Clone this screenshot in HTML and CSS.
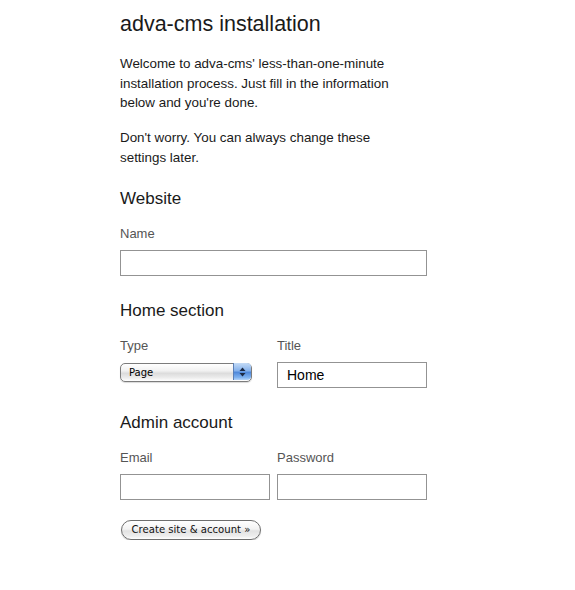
FILE: index.html
```html
<!DOCTYPE html>
<html>
<head>
<meta charset="utf-8">
<title>adva-cms installation</title>
<link rel="stylesheet" href="styles.css">
</head>
<body>
<div class="page">
  <h1 class="title">adva-cms installation</h1>
  <p class="intro">Welcome to adva-cms' less-than-one-minute installation process. Just fill in the information below and you're done.</p>
  <p class="intro">Don't worry. You can always change these settings later.</p>
  <form class="install-form">
    <section class="group">
      <h2 class="group-title">Website</h2>
      <div class="field">
        <label class="field-label">Name</label>
        <input class="text-input wide" type="text">
      </div>
    </section>
    <section class="group">
      <h2 class="group-title">Home section</h2>
      <div class="row">
        <div class="field">
          <label class="field-label">Type</label>
          <span class="popup">
            <select class="popup-select"><option>Page</option></select>
            <span class="popup-arrows">
              <svg width="7" height="10" viewBox="0 0 7 10"><path d="M3.5 0.5 L6.5 4 L0.5 4 Z" fill="#1c2a44"/><path d="M3.5 9.5 L6.5 6 L0.5 6 Z" fill="#1c2a44"/></svg>
            </span>
          </span>
        </div>
        <div class="field">
          <label class="field-label">Title</label>
          <input class="text-input" type="text" value="Home">
        </div>
      </div>
    </section>
    <section class="group">
      <h2 class="group-title">Admin account</h2>
      <div class="row">
        <div class="field">
          <label class="field-label">Email</label>
          <input class="text-input" type="text">
        </div>
        <div class="field">
          <label class="field-label">Password</label>
          <input class="text-input" type="password">
        </div>
      </div>
    </section>
    <div class="actions">
      <button class="submit" type="button">Create site &amp; account »</button>
    </div>
  </form>
</div>
</body>
</html>
```
FILE: styles.css
```css
html, body {
  margin: 0;
  padding: 0;
  background: #fff;
}
body {
  font-family: "Liberation Sans", Arial, Helvetica, sans-serif;
  color: #1a1a1a;
}
.page {
  padding: 11px 0 0 120px;
  width: 307px;
}
.title {
  font-size: 21.5px;
  font-weight: normal;
  line-height: 26px;
  margin: 0 0 17px;
}
.intro {
  font-size: 13.4px;
  line-height: 19.5px;
  margin: 0 0 15.5px;
  width: 285px;
}
.install-form {
  margin: 0;
}
.group {
  margin-top: 22px;
}
.group + .group {
  margin-top: 25px;
}
.group-title {
  font-size: 17px;
  font-weight: normal;
  line-height: 20px;
  margin: 0 0 17px;
}
.field-label {
  display: block;
  font-size: 13px;
  line-height: 16px;
  color: #555;
  margin-bottom: 8px;
}
.row {
  display: grid;
  grid-template-columns: 150px 150px;
  column-gap: 7px;
}
.text-input {
  display: block;
  box-sizing: border-box;
  width: 150px;
  height: 26px;
  margin: 0;
  border: 1px solid #939393;
  border-radius: 0;
  padding: 0 9px 0;
  font-family: "Liberation Sans", Arial, sans-serif;
  font-size: 14px;
  color: #000;
  background: #fff;
  outline: none;
}
.text-input.wide {
  width: 307px;
}
.popup {
  position: relative;
  display: block;
  width: 132px;
  height: 19px;
  margin-top: 1px;
}
.popup-select {
  -webkit-appearance: none;
  appearance: none;
  box-sizing: border-box;
  width: 132px;
  height: 19px;
  margin: 0;
  border: 1px solid #7c7c7c;
  border-radius: 5px;
  padding: 0 0 0 8px;
  font-family: "DejaVu Sans", "Liberation Sans", sans-serif;
  font-size: 10px;
  color: #000;
  background: linear-gradient(#ffffff 0%, #f1f1f1 40%, #dcdcdc 55%, #ececec 80%, #ffffff 100%);
  box-shadow: 0 1px 1px rgba(0,0,0,0.15);
  outline: none;
}
.popup-arrows {
  position: absolute;
  top: 1px;
  right: 1px;
  width: 18px;
  height: 17px;
  border-left: 1px solid #5b7fb6;
  border-radius: 0 4px 4px 0;
  background: linear-gradient(#c4dbf6 0%, #86b2ec 45%, #4f88da 55%, #7fb2f0 85%, #b7d5f8 100%);
  display: flex;
  align-items: center;
  justify-content: center;
  box-sizing: border-box;
}
.actions {
  margin-top: 19px;
}
.submit {
  box-sizing: border-box;
  width: 140px;
  height: 20px;
  margin: 0 0 0 1px;
  padding: 0;
  border: 1px solid #6e6e6e;
  border-radius: 10px;
  font-family: "DejaVu Sans", "Liberation Sans", sans-serif;
  font-size: 10.1px;
  color: #111;
  background: linear-gradient(#ffffff 0%, #f3f3f3 45%, #e2e2e2 55%, #eeeeee 85%, #ffffff 100%);
  box-shadow: 0 1px 1px rgba(0,0,0,0.2);
  cursor: pointer;
}
```
